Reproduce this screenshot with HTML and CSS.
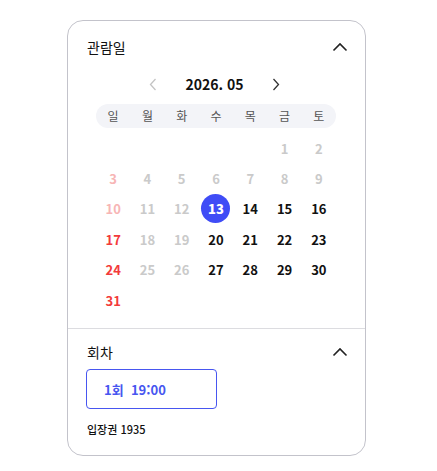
FILE: index.html
```html
<!DOCTYPE html>
<html lang="ko">
<head>
    <meta charset="UTF-8">
    <meta name="viewport" content="width=device-width, initial-scale=1.0">
    <title>관람일 선택</title>
    <link rel="stylesheet" href="styles.css">
</head>
<body>
<div class="card">
    <div class="section date-section">
        <div class="section-head">
            <span class="section-title">관람일</span>
            <svg class="toggle" width="16" height="10" viewBox="0 0 16 10"><path d="M1.5 8.5 L8 2 L14.5 8.5" fill="none" stroke="#222" stroke-width="1.6"/></svg>
        </div>

        <div class="month-nav">
            <svg class="arrow" width="8" height="13" viewBox="0 0 8 13"><path d="M6.5 1 L1.5 6.5 L6.5 12" fill="none" stroke="#c4c4c4" stroke-width="1.3"/></svg>
            <span class="month">2026. 05</span>
            <svg class="arrow" width="8" height="13" viewBox="0 0 8 13"><path d="M1.5 1 L6.5 6.5 L1.5 12" fill="none" stroke="#333" stroke-width="1.3"/></svg>
        </div>

        <div class="weekdays">
            <span>일</span><span>월</span><span>화</span><span>수</span><span>목</span><span>금</span><span>토</span>
        </div>

        <div class="days">
            <span></span><span></span><span></span><span></span><span></span>
            <span class="off">1</span><span class="off">2</span>
            <span class="sun-off">3</span><span class="off">4</span><span class="off">5</span><span class="off">6</span><span class="off">7</span><span class="off">8</span><span class="off">9</span>
            <span class="sun-off">10</span><span class="off">11</span><span class="off">12</span><span class="selected"><b>13</b></span><span>14</span><span>15</span><span>16</span>
            <span class="sun">17</span><span class="off">18</span><span class="off">19</span><span>20</span><span>21</span><span>22</span><span>23</span>
            <span class="sun">24</span><span class="off">25</span><span class="off">26</span><span>27</span><span>28</span><span>29</span><span>30</span>
            <span class="sun">31</span>
        </div>
    </div>

    <div class="section time-section">
        <div class="section-head">
            <span class="section-title">회차</span>
            <svg class="toggle" width="16" height="10" viewBox="0 0 16 10"><path d="M1.5 8.5 L8 2 L14.5 8.5" fill="none" stroke="#222" stroke-width="1.6"/></svg>
        </div>
        <button class="slot">1회&nbsp; 19:00</button>
        <div class="ticket">입장권 1935</div>
    </div>
</div>
</body>
</html>
```

FILE: styles.css
```css
body {
    margin: 0;
    padding: 20px 0 0 67px;
    font-family: "Noto Sans CJK KR", "Noto Sans", sans-serif;
    color: #111;
    background: #fff;
}

.card {
    width: 297px;
    height: 434px;
    border: 1px solid #c3c3cb;
    border-radius: 16px;
    overflow: hidden;
}

.section-head {
    display: flex;
    justify-content: space-between;
    align-items: center;
    height: 20px;
}

.section-title {
    font-size: 14px;
    line-height: 20px;
}

.toggle {
    display: block;
}

.date-section {
    padding: 16px 17px 13px 19px;
    border-bottom: 1px solid #dcdce0;
}

.month-nav {
    display: flex;
    justify-content: center;
    align-items: center;
    gap: 28px;
    height: 24px;
    margin-top: 15px;
    padding-right: 6px;
}

.month {
    font-size: 14px;
    font-weight: bold;
}

.arrow {
    display: block;
}

.weekdays {
    display: grid;
    grid-template-columns: repeat(7, 1fr);
    width: 240px;
    height: 24px;
    margin: 8px 0 0 9px;
    background: #f3f4f8;
    border-radius: 12px;
    font-size: 12px;
    color: #555;
    line-height: 24px;
    text-align: center;
}

.days {
    display: grid;
    grid-template-columns: repeat(7, 1fr);
    grid-auto-rows: 30.4px;
    width: 240px;
    margin: 5px 0 0 9px;
    font-size: 13px;
    font-weight: bold;
}

.days span {
    display: flex;
    justify-content: center;
    align-items: center;
}

.days .off {
    color: #cacaca;
}

.days .sun-off {
    color: #f7b5b5;
}

.days .sun {
    color: #f33a3a;
}

.days .selected b {
    display: flex;
    justify-content: center;
    align-items: center;
    width: 29px;
    height: 29px;
    border-radius: 50%;
    background: #3f4cf6;
    color: #fff;
}

.time-section {
    padding: 13px 17px 0 19px;
}

.slot {
    display: block;
    width: 131px;
    height: 40px;
    margin: 7px 0 0 -1px;
    padding: 0 0 0 17px;
    border: 1px solid #4756f0;
    border-radius: 4px;
    background: #fff;
    color: #4756f0;
    font-family: inherit;
    font-size: 13px;
    font-weight: bold;
    text-align: left;
}

.ticket {
    margin-top: 13px;
    font-size: 11px;
    line-height: 14px;
    font-weight: 500;
}
```
